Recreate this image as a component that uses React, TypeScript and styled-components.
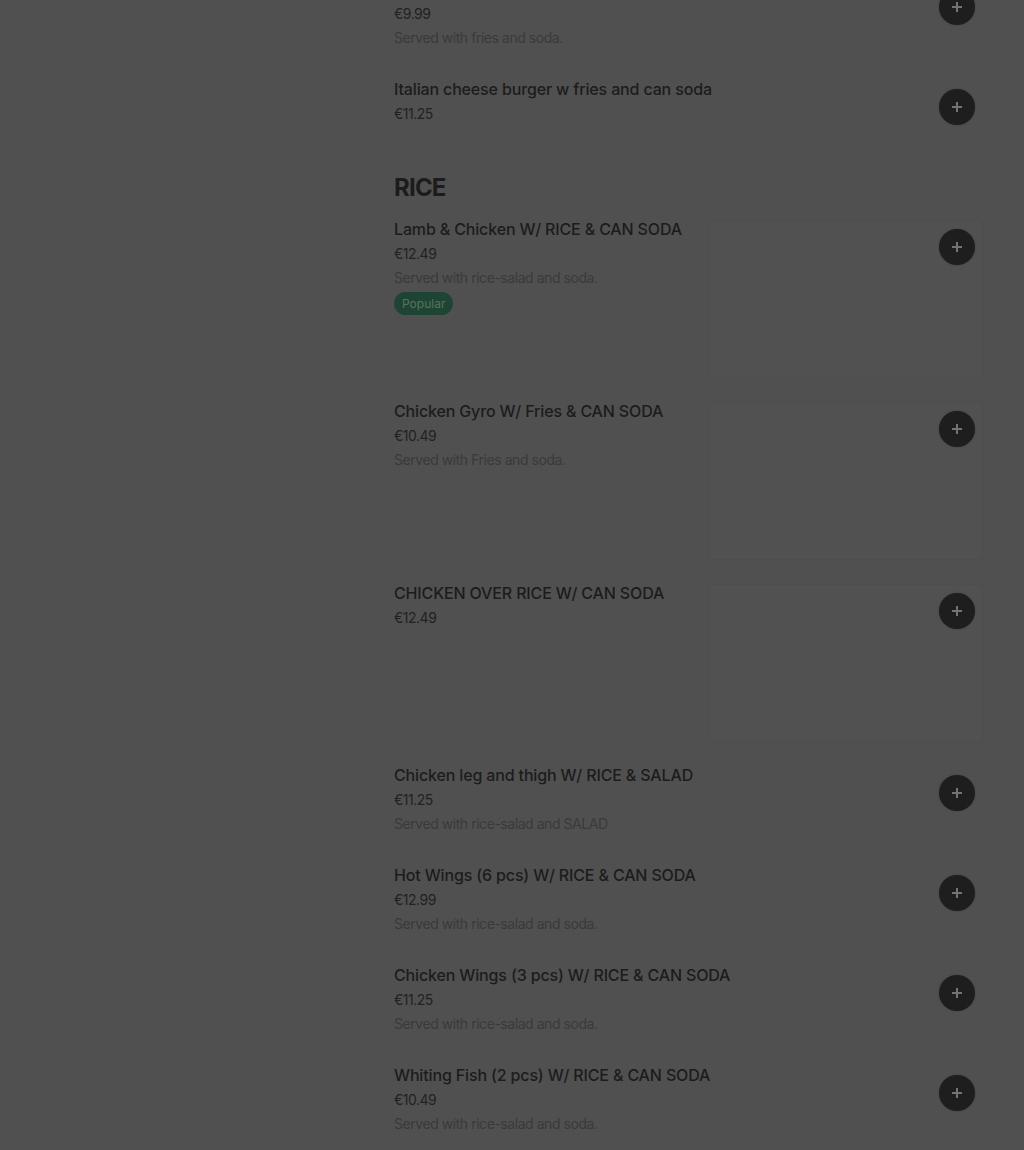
import { createGlobalStyle } from "styled-components"
import styled from "styled-components"

type MenuItem = {
  name: string
  price: string
  description?: string
  popular?: boolean
  hasImage?: boolean
}

type MenuSection = {
  title?: string
  items: MenuItem[]
}

const sections: MenuSection[] = [
  {
    items: [
      { name: "Cheese burger w fries and can soda", price: "€9.99", description: "Served with fries and soda." },
      { name: "Italian cheese burger w fries and can soda", price: "€11.25" },
    ],
  },
  {
    title: "RICE",
    items: [
      {
        name: "Lamb & Chicken W/ RICE & CAN SODA",
        price: "€12.49",
        description: "Served with rice-salad and soda.",
        popular: true,
        hasImage: true,
      },
      { name: "Chicken Gyro W/ Fries & CAN SODA", price: "€10.49", description: "Served with Fries and soda.", hasImage: true },
      { name: "CHICKEN OVER RICE W/ CAN SODA", price: "€12.49", hasImage: true },
      { name: "Chicken leg and thigh W/ RICE & SALAD", price: "€11.25", description: "Served with rice-salad and SALAD" },
      { name: "Hot Wings (6 pcs) W/ RICE & CAN SODA", price: "€12.99", description: "Served with rice-salad and soda." },
      { name: "Chicken Wings (3 pcs) W/ RICE & CAN SODA", price: "€11.25", description: "Served with rice-salad and soda." },
      { name: "Whiting Fish (2 pcs) W/ RICE & CAN SODA", price: "€10.49", description: "Served with rice-salad and soda." },
    ],
  },
]

const GlobalStyle = createGlobalStyle`
  html, body {
    margin: 0;
    padding: 0;
    background: #505050;
    font-family: Inter, "Noto Sans", "Liberation Sans", sans-serif;
  }
  body {
    height: 1150px;
    overflow: hidden;
  }
`

const Page = styled.div`
  display: flex;
  justify-content: flex-start;
  padding-left: 394px;
  /* page is scrolled down a little */
  margin-top: -21px;
`

const Menu = styled.div`
  width: 589px;
  display: flex;
  flex-direction: column;
`

const Section = styled.section`
  display: flex;
  flex-direction: column;
`

const SectionTitle = styled.h2`
  margin: 0 0 15px;
  padding-top: 16px;
  font-size: 24px;
  line-height: 32px;
  font-weight: 700;
  color: #1c1c1c;
  letter-spacing: -0.8px;
`

const Row = styled.div<{ $image?: boolean }>`
  display: flex;
  align-items: flex-start;
  justify-content: space-between;
  gap: 16px;
  padding-bottom: 23px;
  &:last-child {
    padding-bottom: 0;
  }
`

const Info = styled.div`
  flex: 1;
  min-height: 77px;
  display: flex;
  flex-direction: column;
  align-items: flex-start;
`

const Name = styled.h3`
  margin: 0;
  font-size: 16px;
  line-height: 20px;
  font-weight: 500;
  color: #1c1c1c;
  letter-spacing: -0.15px;
`

const Price = styled.div`
  margin-top: 5px;
  font-size: 14px;
  line-height: 20px;
  color: #222222;
  letter-spacing: -0.5px;
`

const Description = styled.div`
  margin-top: 4px;
  font-size: 14px;
  line-height: 20px;
  color: #3a3a3a;
  letter-spacing: -0.45px;
`

const Badge = styled.span`
  margin-top: 4px;
  height: 23px;
  display: inline-flex;
  align-items: center;
  padding: 0 8px;
  border-radius: 12px;
  background: #1e4533;
  color: #56735f;
  font-size: 12px;
  letter-spacing: 0;
`

const ImageBox = styled.div`
  position: relative;
  margin-top: 1px;
  width: 275px;
  height: 158px;
  border-radius: 4px;
  background: #515151;
  box-shadow: inset 0 0 0 1px #4e4e4e;
`

const ButtonSlot = styled.div`
  padding: 10px 8px 0 0;
`

const AddButton = styled.button<{ $overlay?: boolean }>`
  width: 36px;
  height: 36px;
  border-radius: 50%;
  border: none;
  padding: 0;
  background: #1e1e1e;
  color: #737373;
  display: flex;
  align-items: center;
  justify-content: center;
  box-shadow: 0 0 2px rgba(0, 0, 0, 0.25);
  ${(p) => (p.$overlay ? "position: absolute; top: 9px; right: 8px;" : "")}
`

const PlusIcon = () => (
  <svg width="12" height="12" viewBox="0 0 12 12" fill="none">
    <path d="M6 1v10M1 6h10" stroke="currentColor" strokeWidth="2" />
  </svg>
)

const ItemRow = ({ item }: { item: MenuItem }) => {
  const { name, price, description, popular, hasImage } = item
  return (
    <Row $image={hasImage}>
      <Info>
        <Name>{name}</Name>
        <Price>{price}</Price>
        {description && <Description>{description}</Description>}
        {popular && <Badge>Popular</Badge>}
      </Info>
      {hasImage ? (
        <ImageBox>
          <AddButton $overlay aria-label="Add item">
            <PlusIcon />
          </AddButton>
        </ImageBox>
      ) : (
        <ButtonSlot>
          <AddButton aria-label="Add item">
            <PlusIcon />
          </AddButton>
        </ButtonSlot>
      )}
    </Row>
  )
}

export default function App() {
  return (
    <>
      <GlobalStyle />
      <Page>
        <Menu>
          {sections.map((section, i) => (
            <Section key={i}>
              {section.title && <SectionTitle>{section.title}</SectionTitle>}
              {section.items.map((item) => (
                <ItemRow key={item.name} item={item} />
              ))}
            </Section>
          ))}
        </Menu>
      </Page>
    </>
  )
}
